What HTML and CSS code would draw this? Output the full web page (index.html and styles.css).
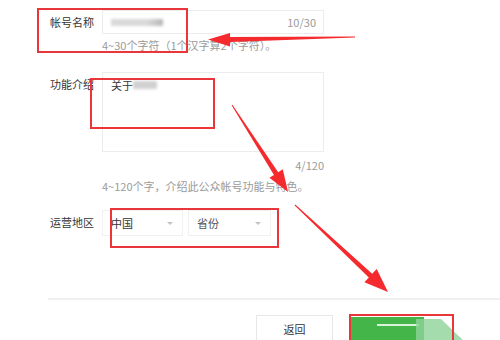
FILE: index.html
```html
<!DOCTYPE html>
<html lang="zh-CN">
<head>
    <meta charset="UTF-8">
    <meta name="viewport" content="width=device-width, initial-scale=1.0">
    <title>帐号信息</title>
    <link rel="stylesheet" href="styles.css">
</head>
<body>

    <div class="page">
        <div class="form">
            <div class="row">
                <label class="label">帐号名称</label>
                <div class="field">
                    <div class="input">
                        <span class="mosaic mosaic-name"></span>
                        <span class="count">10/30</span>
                    </div>
                    <p class="hint">4~30个字符（1个汉字算2个字符）。</p>
                </div>
            </div>

            <div class="row row-intro">
                <label class="label">功能介绍</label>
                <div class="field">
                    <div class="textarea">
                        <span class="value">关于</span><span class="mosaic mosaic-intro"></span>
                    </div>
                    <p class="counter">4/120</p>
                    <p class="hint">4~120个字，介绍此公众帐号功能与特色。</p>
                </div>
            </div>

            <div class="row row-area">
                <label class="label">运营地区</label>
                <div class="field selects">
                    <div class="select">中国<span class="caret"></span></div>
                    <div class="select select-muted">省份<span class="caret"></span></div>
                </div>
            </div>
        </div>

        <div class="footer">
            <button class="btn">返回</button>
            <button class="btn btn-primary"><span class="mosaic mosaic-btn"></span></button>
            <span class="smear"></span>
        </div>

        <!-- red annotations drawn over the screenshot -->
        <svg class="marks" width="500" height="340" viewBox="0 0 500 340">
            <g fill="none" stroke="#e8363b" stroke-width="2">
                <rect x="38" y="9" width="149" height="43"/>
                <rect x="91" y="79" width="123" height="49"/>
                <rect x="111" y="209" width="167" height="38"/>
                <rect x="350" y="315" width="103" height="30"/>
            </g>
            <g fill="#f52a2e">
                <polygon points="355,36.6 230,37 230,33 208,39.5 230,46.5 230,42 355,37.6"/>
                <polygon points="231.6,105.3 274,174.9 269.4,177.8 288,192 282.8,169.2 278.2,172.2 232.4,104.7"/>
                <polygon points="294.7,205.4 368.8,277.4 364.4,282.2 388,292 376.7,269 372.2,273.8 295.3,204.6"/>
            </g>
        </svg>
    </div>

</body>
</html>
```

FILE: styles.css
```css
body {
    margin: 0;
    background-color: #fff;
    font-family: "Noto Sans CJK SC", "Noto Sans", sans-serif;
    font-size: 11px;
    color: #353535;
}
.page {
    position: relative;
    width: 500px;
    height: 340px;
    overflow: hidden;
}
.form {
    padding: 10px 0 0 50px;
}
.row {
    display: flex;
}
.row-intro {
    margin-top: 20px;
}
.row-area {
    margin-top: 17px;
}
.label {
    width: 52px;
    line-height: 24px;
}
.field {
    width: 222px;
}
.input {
    display: flex;
    align-items: center;
    justify-content: space-between;
    height: 22px;
    padding: 0 7px 0 8px;
    border: 1px solid #ececef;
}
.count, .counter, .hint {
    color: #9a9a9a;
}
.hint {
    margin: 4px 0 0;
    line-height: 14px;
    white-space: nowrap;
}
.textarea {
    display: flex;
    align-items: flex-start;
    height: 78px;
    padding: 0 8px;
    line-height: 24px;
    border: 1px solid #ececef;
}
.counter {
    margin: 6px 0 0;
    line-height: 14px;
    text-align: right;
}
.counter + .hint {
    margin-top: 7px;
}
.mosaic {
    display: inline-block;
    background-color: #bdbdbd;
    filter: blur(1.5px);
    opacity: 0.7;
}
.mosaic-name {
    width: 52px;
    height: 7px;
    background: linear-gradient(to right, #c8c8c8 70%, #999 100%);
}
.mosaic-intro {
    width: 24px;
    height: 8px;
    margin-top: 8px;
}
.selects {
    display: flex;
    gap: 5px;
}
.select {
    position: relative;
    width: 71px;
    height: 24px;
    padding-left: 8px;
    line-height: 24px;
    border: 1px solid #f1f1f3;
}
.select-muted {
    width: 73px;
    color: #555;
}
.caret {
    position: absolute;
    right: 9px;
    top: 11px;
    border-left: 3px solid transparent;
    border-right: 3px solid transparent;
    border-top: 3px solid #c4c4c4;
}
.footer {
    position: relative;
    display: flex;
    gap: 17px;
    margin: 62px 0 0 48px;
    padding: 15px 0 0 208px;
    border-top: 2px solid #f0f0f0;
}
.btn {
    width: 77px;
    height: 28px;
    padding: 0;
    border: 1px solid #e7e7eb;
    background-color: #fff;
    font-family: inherit;
    font-size: 11px;
    color: #353535;
}
.btn-primary {
    display: flex;
    width: 74px;
    margin-top: 2px;
    border-color: #44b549;
    background-color: #44b549;
}
.mosaic-btn {
    width: 42px;
    height: 2px;
    margin: 6px 0 0 26px;
    background-color: #f4fff4;
    opacity: 0.85;
    filter: blur(0.5px);
}
.smear {
    position: absolute;
    left: 368px;
    top: 19px;
    width: 50px;
    height: 24px;
    background-color: #8fd39a;
    opacity: 0.8;
    clip-path: polygon(0 0, 50% 0, 100% 100%, 0 100%);
}
.marks {
    position: absolute;
    left: 0;
    top: 0;
}
```
